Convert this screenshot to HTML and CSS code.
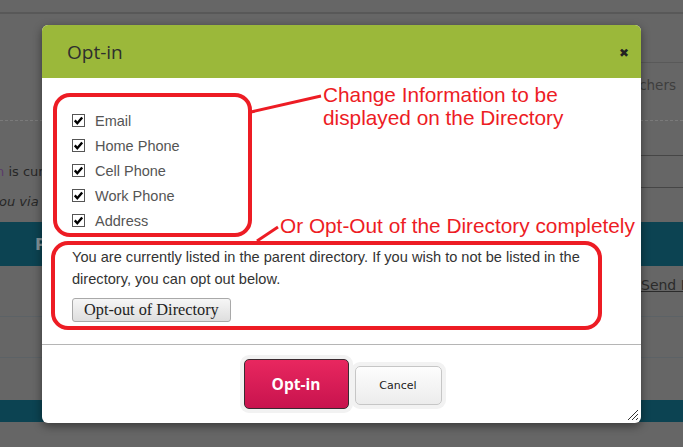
FILE: index.html
```html
<!DOCTYPE html>
<html>
<head>
<meta charset="utf-8">
<link rel="stylesheet" href="styles.css">
</head>
<body>
<div class="page">
  <div class="topbar"></div>
  <div class="tabbar"></div>
  <div class="subnav"><span class="subnav-link">chers</span></div>
  <div class="info">
    <div class="info-left">
      <p class="info-line"><span class="info-lead">n</span> is curr</p>
      <p class="info-line info-italic">ou via</p>
    </div>
    <div class="info-right"></div>
  </div>
  <div class="band"><span class="band-title">P</span></div>
  <div class="row row-first"><a class="row-link">Send M</a></div>
  <div class="row row-second"></div>
  <div class="row row-third"></div>
  <div class="band band-small"></div>

  <div class="modal">
    <div class="modal-header">
      <h2 class="modal-title">Opt-in</h2>
      <span class="modal-close">&#x2716;</span>
    </div>
    <div class="modal-body">
      <ul class="checklist">
        <li class="check-row"><span class="check-box"><svg viewBox="0 0 13 13" width="13" height="13"><path d="M2.8 6.4 L5.3 9.2 L10.2 3.4" fill="none" stroke="#000" stroke-width="2.4"/></svg></span>Email</li>
        <li class="check-row"><span class="check-box"><svg viewBox="0 0 13 13" width="13" height="13"><path d="M2.8 6.4 L5.3 9.2 L10.2 3.4" fill="none" stroke="#000" stroke-width="2.4"/></svg></span>Home Phone</li>
        <li class="check-row"><span class="check-box"><svg viewBox="0 0 13 13" width="13" height="13"><path d="M2.8 6.4 L5.3 9.2 L10.2 3.4" fill="none" stroke="#000" stroke-width="2.4"/></svg></span>Cell Phone</li>
        <li class="check-row"><span class="check-box"><svg viewBox="0 0 13 13" width="13" height="13"><path d="M2.8 6.4 L5.3 9.2 L10.2 3.4" fill="none" stroke="#000" stroke-width="2.4"/></svg></span>Work Phone</li>
        <li class="check-row"><span class="check-box"><svg viewBox="0 0 13 13" width="13" height="13"><path d="M2.8 6.4 L5.3 9.2 L10.2 3.4" fill="none" stroke="#000" stroke-width="2.4"/></svg></span>Address</li>
      </ul>
      <p class="listed-text">You are currently listed in the parent directory. If you wish to not be listed in the directory, you can opt out below.</p>
      <button class="optout-btn">Opt-out of Directory</button>
    </div>
    <div class="modal-footer">
      <button class="btn-primary">Opt-in</button>
      <button class="btn-cancel">Cancel</button>
    </div>
    <svg class="grip" viewBox="0 0 12 12" width="12" height="12">
      <path d="M1 11 L11 1 M5 11 L11 5 M9 11 L11 9" stroke="#333" stroke-width="1"/>
    </svg>
  </div>

  <svg class="annot-shapes" width="683" height="447" viewBox="0 0 683 447">
    <rect x="55" y="95" width="195" height="140" rx="15" fill="none" stroke="#ed1c24" stroke-width="4"/>
    <rect x="53" y="243" width="547" height="85" rx="15" fill="none" stroke="#ed1c24" stroke-width="4"/>
    <path d="M251 112 L321 96" stroke="#ed1c24" stroke-width="3"/>
    <path d="M257 241 L278 227" stroke="#ed1c24" stroke-width="3"/>
  </svg>
  <div class="annot annot-one">Change Information to be<br>displayed on the Directory</div>
  <div class="annot annot-two">Or Opt-Out of the Directory completely</div>
</div>
</body>
</html>
```
FILE: styles.css
```css
* { box-sizing: border-box; }
html, body { margin: 0; padding: 0; }
body { width: 683px; height: 447px; overflow: hidden; font-family: "Liberation Sans", Arial, sans-serif; }

.page { position: relative; width: 683px; height: 447px; background: #666666; overflow: hidden; }

.topbar { height: 14px; border-bottom: 2px solid #585858; }
.tabbar { height: 49px; margin-left: 560px; border-bottom: 1px solid #595959; }
.subnav { height: 58px; border-bottom: 1px dashed #7a7a7a; display: flex; justify-content: flex-end; padding: 14px 7px 0 0; }
.subnav-link { font-family: "DejaVu Sans", sans-serif; font-size: 13.5px; color: #3e3e3e; }

.info { height: 101px; display: flex; justify-content: space-between; }
.info-left { width: 42px; overflow: hidden; padding-top: 36px; }
.info-line { margin: 0; line-height: 30px; font-family: "DejaVu Sans", sans-serif; font-size: 13px; color: #262626; white-space: nowrap; }
.info-line:first-child { margin-left: -4px; }
.info-lead { color: #5a3a6a; }
.info-italic { font-style: italic; margin-left: -1px; }
.info-right { width: 130px; margin-top: 34px; height: 33px; border-top: 1px solid #464646; border-bottom: 1px solid #464646; }

.band { height: 44px; background: #0c4352; display: flex; align-items: center; padding-left: 35px; }
.band-title { font-family: "DejaVu Sans", sans-serif; font-weight: bold; font-size: 16px; color: #84949a; }
.band-small { height: 22px; padding: 0; }

.row { border-bottom: 1px solid #5c6266; }
.row-first { height: 51px; padding: 10px 0 0 641px; }
.row-link { font-family: "DejaVu Sans", sans-serif; font-size: 14px; color: #2b2b2b; text-decoration: underline; white-space: nowrap; }
.row-second { height: 41px; }
.row-third { height: 42px; border-bottom: none; }

/* modal */
.modal { position: absolute; left: 42px; top: 25px; width: 599px; height: 398px; background: #fff; border-radius: 6px; box-shadow: 0 3px 10px rgba(0,0,0,0.45); display: flex; flex-direction: column; overflow: hidden; }
.modal-header { height: 53px; flex: none; background: #9bb83a; display: flex; align-items: center; justify-content: space-between; padding: 0 12px 0 25px; }
.modal-title { margin: 0; font-family: "Open Sans", sans-serif; font-weight: normal; font-size: 19px; color: #2e2e2e; }
.modal-close { font-size: 12px; color: #222; font-family: "DejaVu Sans", sans-serif; margin-top: 3px; }

.modal-body { padding: 30px 30px 22px 30px; flex: none; border-bottom: 1px solid #b5b5b5; }
.checklist { list-style: none; margin: 0; padding: 0; }
.check-row { height: 25px; display: flex; align-items: center; gap: 10px; font-size: 14.5px; color: #555; }
.check-box { width: 13px; height: 13px; border: 1px solid #555; background: #fff; display: flex; }
.check-box svg { margin: -1px; }

.listed-text { margin: 13px 0 0 0; font-size: 14.6px; line-height: 22px; color: #333; }
.optout-btn { margin-top: 8px; height: 24px; padding: 0 11px; font-family: "Liberation Serif", "Times New Roman", serif; font-size: 16.3px; color: #222; background: linear-gradient(#f6f6f6, #dedede); border: 1px solid #a9a9a9; border-radius: 3px; }

.modal-footer { flex: 1; display: flex; align-items: center; justify-content: center; gap: 6px; padding-left: 2px; }
.btn-primary { width: 105px; height: 50px; border: 1px solid #3a2a30; border-radius: 5px; background: linear-gradient(#e8275f, #c8134e); color: #fff; font-family: "Open Sans", sans-serif; font-weight: bold; font-size: 15.5px; box-shadow: 0 0 0 4px #f2f2f2; }
.btn-cancel { width: 87px; height: 39px; border: 1px solid #c6c6c6; border-radius: 5px; background: linear-gradient(#fdfdfd, #ececec); color: #222; font-family: "DejaVu Sans", sans-serif; font-size: 11px; box-shadow: 0 0 0 4px #f2f2f2; margin-top: 2px; }

.grip { position: absolute; right: 2px; bottom: 2px; }

/* annotations */
.annot-shapes { position: absolute; left: 0; top: 0; pointer-events: none; }
.annot { position: absolute; font-family: "Liberation Sans", Arial, sans-serif; font-size: 20.8px; line-height: 23px; color: #ed1c24; white-space: nowrap; }
.annot-one { left: 323px; top: 83px; }
.annot-two { left: 280px; top: 214px; }
```
